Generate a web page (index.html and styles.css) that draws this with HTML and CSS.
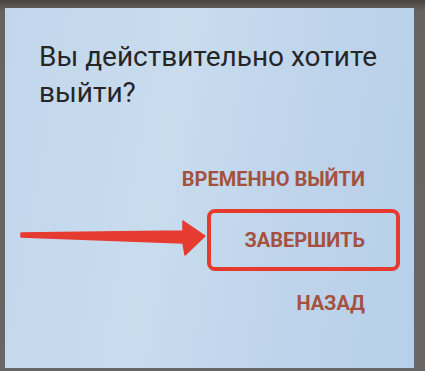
FILE: index.html
```html
<!DOCTYPE html>
<html lang="ru">

<head>
    <title>Выход</title>
    <link rel="stylesheet" href="styles.css">
</head>

<body>
    <div class="dialog">
        <h2 class="title">Вы действительно хотите выйти?</h2>

        <div class="actions">
            <div class="row">
                <button class="action">ВРЕМЕННО ВЫЙТИ</button>
            </div>
            <div class="row">
                <svg class="arrow" width="200" height="62" viewBox="0 0 200 62">
                    <path d="M14,24 L176,22 L176,12 L198,27 L178,46 L176,34 L14,28 Z" fill="#e53b30" stroke="#e53b30" stroke-width="1.5" stroke-linejoin="round"/>
                </svg>
                <div class="highlight">
                    <button class="action">ЗАВЕРШИТЬ</button>
                </div>
            </div>
            <div class="row">
                <button class="action">НАЗАД</button>
            </div>
        </div>
    </div>
</body>

</html>
```

FILE: styles.css
```css
html, body { height: 100%; }
body { margin: 0; background: linear-gradient(180deg, #4a4441 0, #676360 3%, #6a6663 100%); font-family: Roboto, "Noto Sans", sans-serif; }
.dialog { margin: 0 11px 0 5px; position: relative; top: 8px; height: 360px; box-sizing: border-box; padding: 31px 14px 0 34px; background: linear-gradient(100deg, #c2d7ec 0%, #c9dcee 40%, #bed4eb 70%, #b7cfe9 100%); }
.title { margin: 0; font-size: 28px; font-weight: normal; line-height: 36px; color: #262626; }
.actions { margin-top: 58px; display: flex; flex-direction: column; }
.row { display: flex; justify-content: flex-end; align-items: center; }
.action { background: none; border: 0; padding: 0 35px 0 0; font-family: Roboto, sans-serif; font-size: 20px; font-weight: bold; line-height: 20px; color: #a4523f; }
.highlight { flex-shrink: 0; width: 193px; height: 62px; box-sizing: border-box; margin: 20px 0 22px; border: 4px solid #e63a2f; border-radius: 8px; display: flex; justify-content: flex-end; align-items: center; }
.highlight .action { padding-right: 31px; }
.arrow { display: block; flex-shrink: 0; margin: -2px 0 0 -32px; }
```
